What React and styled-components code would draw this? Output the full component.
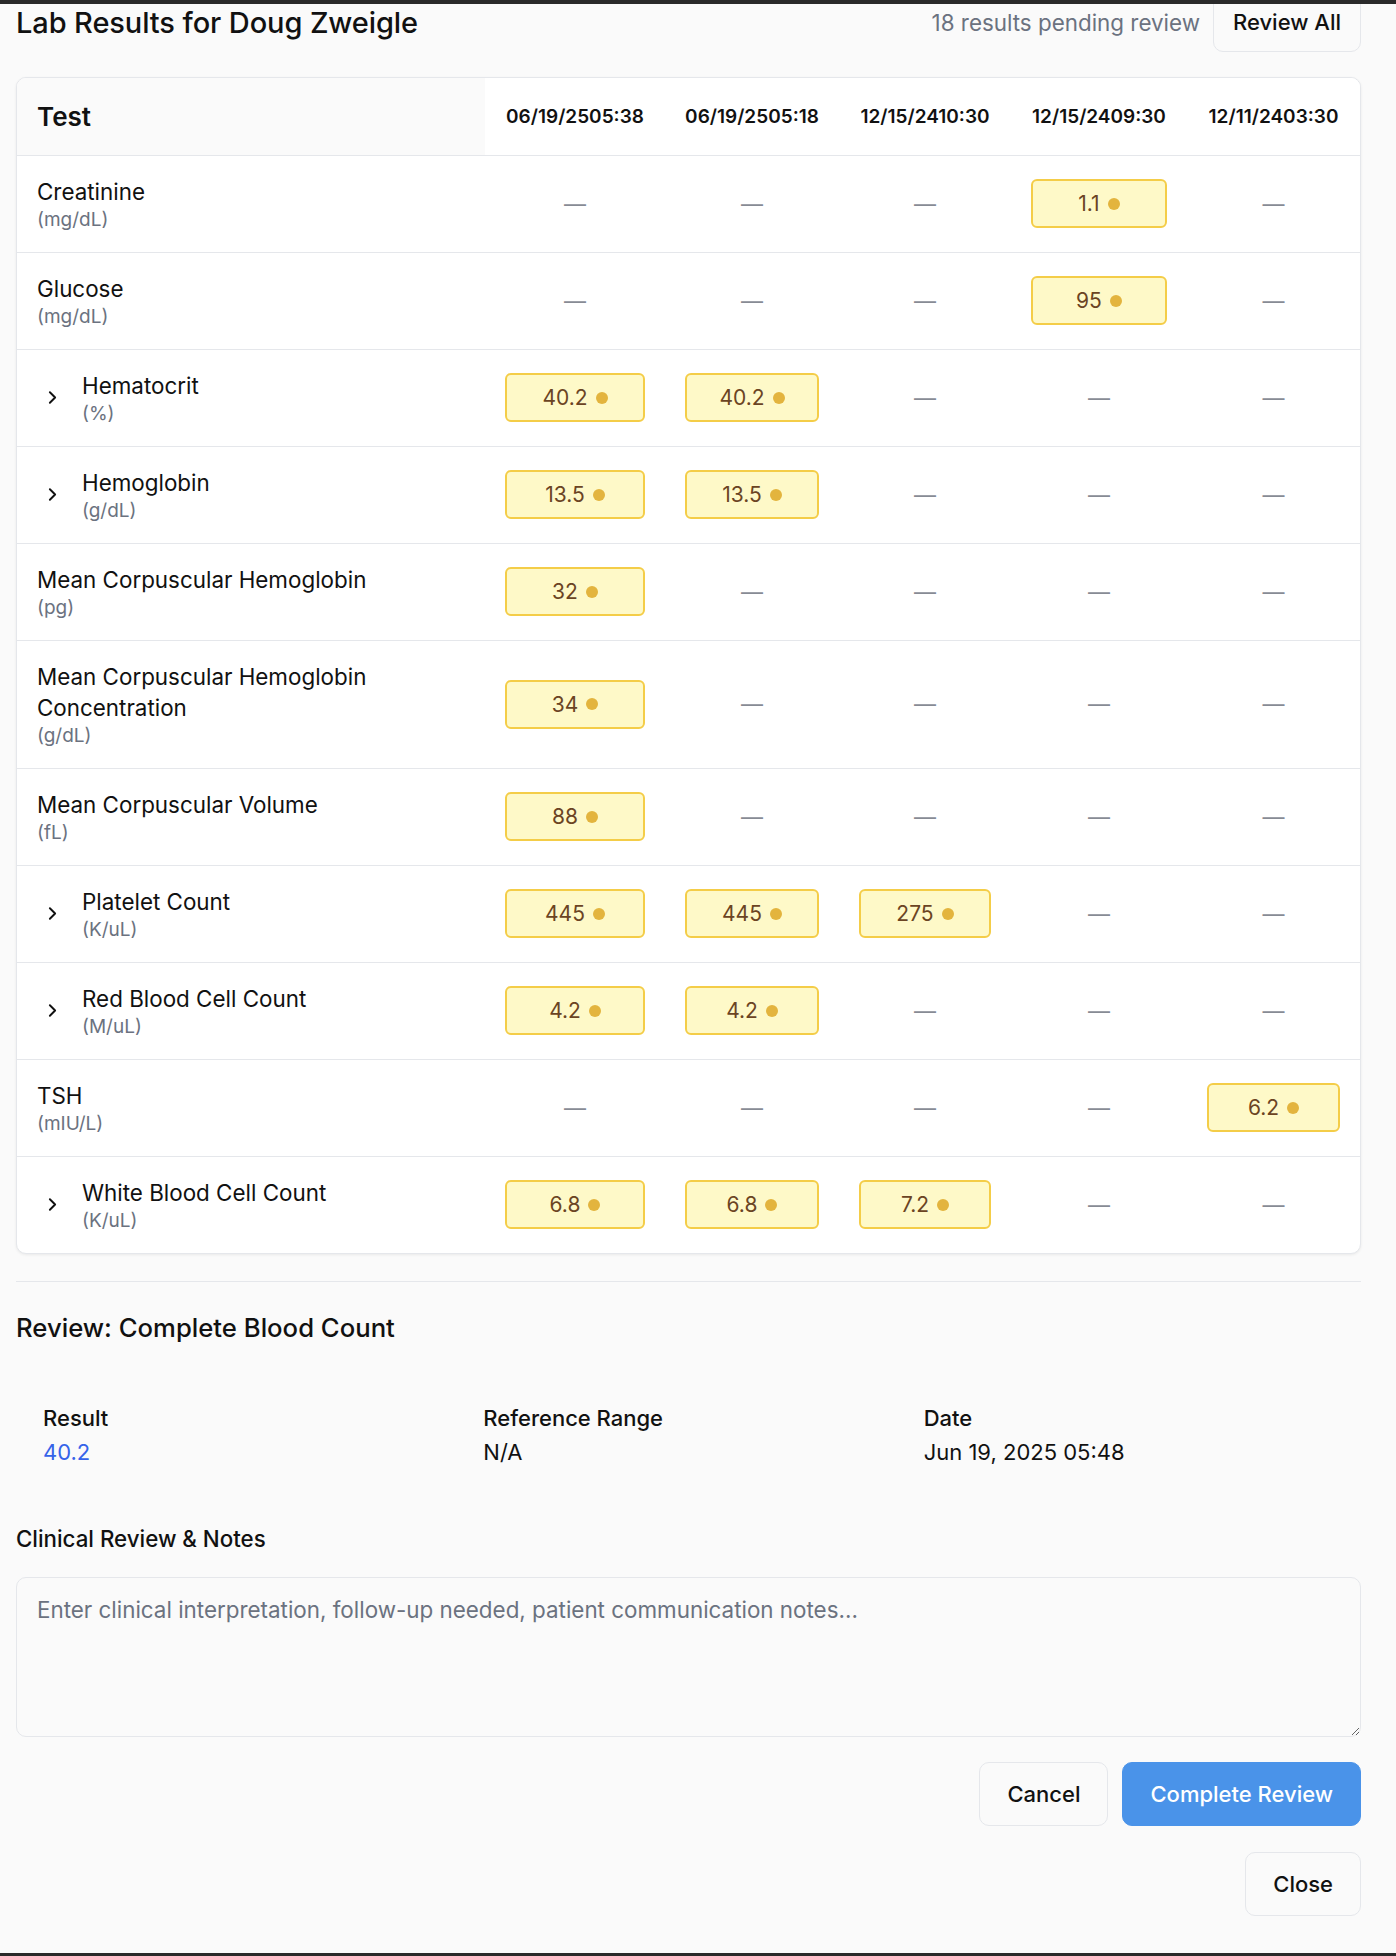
import React from "react";
import styled, { createGlobalStyle } from "styled-components";
import { ChevronRight } from "lucide-react";

const GlobalStyle = createGlobalStyle`
  html, body {
    margin: 0;
    padding: 0;
    background: #fafafa;
    font-family: Inter, "Noto Sans", "Liberation Sans", sans-serif;
    color: #111111;
  }
  * { box-sizing: border-box; }
`;

const Page = styled.div`
  height: 1956px;
  display: flex;
  flex-direction: column;
  overflow: hidden;
`;

const Strip = styled.div`
  height: ${(p) => p.h}px;
  flex-shrink: 0;
  background: #2a2a2a;
  position: relative;
  z-index: 2;
`;

const Modal = styled.div`
  flex: 1;
  background: #fafafa;
  padding: 0 35px 0 16px;
  overflow: hidden;
`;

const Header = styled.div`
  display: flex;
  align-items: center;
  justify-content: space-between;
  height: 60px;
  margin-top: -12px;
  margin-bottom: 25px;
`;

const Title = styled.h2`
  margin: 0;
  font-size: 29px;
  font-weight: 500;
  letter-spacing: -0.1px;
`;

const HeaderRight = styled.div`
  display: flex;
  align-items: center;
  gap: 13px;
`;

const Pending = styled.span`
  font-size: 22.4px;
  color: #6b7280;
`;

const Button = styled.button`
  font-family: inherit;
  font-size: 22px;
  font-weight: 500;
  height: ${(p) => p.h || 64}px;
  padding: 0 ${(p) => p.px || 27}px;
  border-radius: 10px;
  border: 1px solid ${(p) => (p.primary ? "#4a93e9" : "#e5e7eb")};
  background: ${(p) => (p.primary ? "#4a93e9" : "#fafafa")};
  color: ${(p) => (p.primary ? "#ffffff" : "#111111")};
  cursor: pointer;
`;

const Card = styled.div`
  background: #ffffff;
  border: 1px solid #e5e7eb;
  border-radius: 10px;
  box-shadow: 0 1px 3px rgba(0, 0, 0, 0.07);
  overflow: hidden;
`;

const Table = styled.table`
  width: 100%;
  border-collapse: collapse;
  table-layout: fixed;
`;

const Th = styled.th`
  height: 77px;
  padding: 0 ${(p) => (p.first ? 20 : 0)}px;
  text-align: ${(p) => (p.first ? "left" : "center")};
  font-size: ${(p) => (p.first ? 26 : 19)}px;
  font-weight: 600;
  background: ${(p) => (p.first ? "#fafafa" : "#ffffff")};
  border-bottom: 1px solid #e5e7eb;
  white-space: nowrap;
`;

const Tr = styled.tr`
  & + & td {
    border-top: 1px solid #e5e7eb;
  }
`;

const Td = styled.td`
  padding: ${(p) => (p.first ? "20px 20px" : "0 20px")};
  text-align: center;
  vertical-align: middle;
`;

const TestCell = styled.div`
  display: flex;
  align-items: center;
  gap: 19px;
  text-align: left;
`;

const Chevron = styled.span`
  display: flex;
  margin-left: 5px;
  color: #111111;
`;

const TestName = styled.div`
  font-size: 22.4px;
  line-height: 31px;
  max-width: 400px;
`;

const Unit = styled.div`
  font-size: 19px;
  line-height: 25px;
  color: #6b7280;
`;

const Dash = styled.span`
  font-size: 22px;
  color: #878b94;
`;

const Badge = styled.div`
  height: 49px;
  display: flex;
  align-items: center;
  justify-content: center;
  gap: 8px;
  background: #fef9c8;
  border: 2px solid #f4cd48;
  border-radius: 6px;
  font-size: 21px;
  color: #6b4423;
`;

const Dot = styled.span`
  width: 12px;
  height: 12px;
  border-radius: 50%;
  background: #e3b43e;
`;

const Divider = styled.hr`
  border: none;
  border-top: 1px solid #e5e7eb;
  margin: 27px 0 0;
`;

const SectionTitle = styled.h3`
  margin: 30px 0 0;
  font-size: 25.7px;
  line-height: 32px;
  font-weight: 500;
`;

const InfoGrid = styled.div`
  display: grid;
  grid-template-columns: repeat(3, 1fr);
  gap: 24px;
  padding: 24px 21px 24px 27px;
  margin-top: 36px;
`;

const InfoLabel = styled.div`
  font-size: 22px;
  line-height: 28px;
  font-weight: 500;
`;

const InfoValue = styled.div`
  font-size: 22px;
  line-height: 28px;
  margin-top: 6px;
  color: ${(p) => (p.accent ? "#3563e9" : "#111111")};
`;

const NotesLabel = styled.div`
  font-size: 22.3px;
  line-height: 28px;
  font-weight: 500;
  margin-top: 35px;
`;

const Notes = styled.textarea`
  display: block;
  width: 100%;
  height: 160px;
  margin-top: 24px;
  padding: 18px 20px;
  font-family: inherit;
  font-size: 22.4px;
  line-height: 28px;
  background: #fafafa;
  border: 1px solid #e5e7eb;
  border-radius: 10px;
  color: #111111;
  &::placeholder {
    color: #6b7280;
  }
`;

const Actions = styled.div`
  display: flex;
  justify-content: flex-end;
  gap: 14px;
  margin-top: ${(p) => p.mt}px;
`;

const dates = [
  "06/19/2505:38",
  "06/19/2505:18",
  "12/15/2410:30",
  "12/15/2409:30",
  "12/11/2403:30",
];
const colWidths = [180, 174, 172, 176, 173];

const rows = [
  { name: "Creatinine", unit: "(mg/dL)", vals: [null, null, null, "1.1", null] },
  { name: "Glucose", unit: "(mg/dL)", vals: [null, null, null, "95", null] },
  { name: "Hematocrit", unit: "(%)", expand: true, vals: ["40.2", "40.2", null, null, null] },
  { name: "Hemoglobin", unit: "(g/dL)", expand: true, vals: ["13.5", "13.5", null, null, null] },
  { name: "Mean Corpuscular Hemoglobin", unit: "(pg)", vals: ["32", null, null, null, null] },
  { name: "Mean Corpuscular Hemoglobin Concentration", unit: "(g/dL)", vals: ["34", null, null, null, null] },
  { name: "Mean Corpuscular Volume", unit: "(fL)", vals: ["88", null, null, null, null] },
  { name: "Platelet Count", unit: "(K/uL)", expand: true, vals: ["445", "445", "275", null, null] },
  { name: "Red Blood Cell Count", unit: "(M/uL)", expand: true, vals: ["4.2", "4.2", null, null, null] },
  { name: "TSH", unit: "(mIU/L)", vals: [null, null, null, null, "6.2"] },
  { name: "White Blood Cell Count", unit: "(K/uL)", expand: true, vals: ["6.8", "6.8", "7.2", null, null] },
];

function App() {
  return (
    <>
      <GlobalStyle />
      <Page>
        <Strip h={4} />
        <Modal>
          <Header>
            <Title>Lab Results for Doug Zweigle</Title>
            <HeaderRight>
              <Pending>18 results pending review</Pending>
              <Button h={60} px={19}>Review All</Button>
            </HeaderRight>
          </Header>

          <Card>
            <Table>
              <colgroup>
                <col />
                {colWidths.map((w, i) => (
                  <col key={i} style={{ width: w }} />
                ))}
              </colgroup>
              <thead>
                <tr>
                  <Th first>Test</Th>
                  {dates.map((d) => (
                    <Th key={d}>{d}</Th>
                  ))}
                </tr>
              </thead>
              <tbody>
                {rows.map((r) => (
                  <Tr key={r.name}>
                    <Td first>
                      <TestCell>
                        {r.expand && (
                          <Chevron>
                            <ChevronRight size={21} strokeWidth={2.2} />
                          </Chevron>
                        )}
                        <div>
                          <TestName>{r.name}</TestName>
                          <Unit>{r.unit}</Unit>
                        </div>
                      </TestCell>
                    </Td>
                    {r.vals.map((v, i) => (
                      <Td key={i}>
                        {v ? (
                          <Badge>
                            {v}
                            <Dot />
                          </Badge>
                        ) : (
                          <Dash>—</Dash>
                        )}
                      </Td>
                    ))}
                  </Tr>
                ))}
              </tbody>
            </Table>
          </Card>

          <Divider />
          <SectionTitle>Review: Complete Blood Count</SectionTitle>

          <InfoGrid>
            <div>
              <InfoLabel>Result</InfoLabel>
              <InfoValue accent>40.2</InfoValue>
            </div>
            <div>
              <InfoLabel>Reference Range</InfoLabel>
              <InfoValue>N/A</InfoValue>
            </div>
            <div>
              <InfoLabel>Date</InfoLabel>
              <InfoValue>Jun 19, 2025 05:48</InfoValue>
            </div>
          </InfoGrid>

          <NotesLabel>Clinical Review &amp; Notes</NotesLabel>
          <Notes placeholder="Enter clinical interpretation, follow-up needed, patient communication notes..." />

          <Actions mt={25}>
            <Button>Cancel</Button>
            <Button primary>Complete Review</Button>
          </Actions>
          <Actions mt={26}>
            <Button>Close</Button>
          </Actions>
        </Modal>
        <Strip h={3} />
      </Page>
    </>
  );
}

export default App;
